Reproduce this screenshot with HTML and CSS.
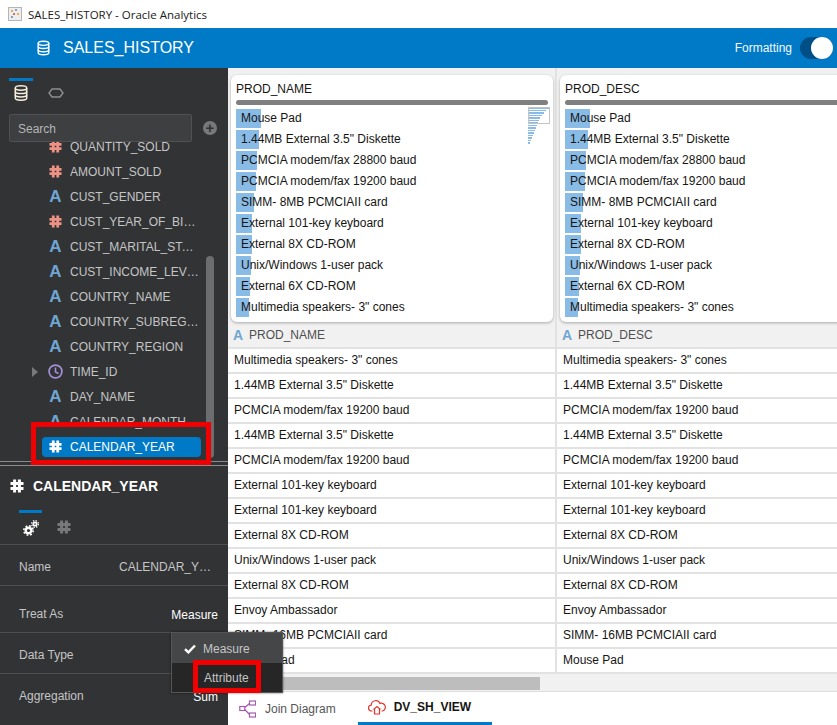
FILE: index.html
```html
<!doctype html>
<html>
<head>
<meta charset="utf-8">
<title>SALES_HISTORY - Oracle Analytics</title>
<link rel="stylesheet" href="styles.css">
</head>
<body>
<svg class="defs" width="0" height="0">
	<symbol id="hash" viewBox="0 0 14 14">
		<path d="M4.6 0.5v13M9.4 0.5v13M0.5 4.6h13M0.5 9.4h13" fill="none" stroke="currentColor" stroke-width="3"/>
	</symbol>
	<symbol id="db" viewBox="0 0 14 16">
		<g fill="none" stroke="currentColor" stroke-width="1.5">
			<ellipse cx="7" cy="3" rx="5.7" ry="2.2"/>
			<path d="M1.3 3v10c0 1.2 2.5 2.2 5.7 2.2s5.7-1 5.7-2.2V3"/>
			<path d="M1.3 6.4c0 1.2 2.5 2.2 5.7 2.2s5.7-1 5.7-2.2M1.3 9.8c0 1.2 2.5 2.2 5.7 2.2s5.7-1 5.7-2.2"/>
		</g>
	</symbol>
</svg>

<div class="titlebar">
	<svg class="appicon" width="14" height="14" viewBox="0 0 14 14">
		<rect x="0.5" y="0.5" width="13" height="13" fill="#eeeeee" stroke="#b5b5b5"/>
		<rect x="3" y="3" width="2" height="2" fill="#e8b04a"/>
		<rect x="7" y="2" width="2" height="2" fill="#6fa8d6"/>
		<rect x="5" y="6" width="2" height="2" fill="#d9705f"/>
		<rect x="9" y="6" width="2" height="2" fill="#e8b04a"/>
		<rect x="3" y="9" width="2" height="2" fill="#6fa8d6"/>
	</svg>
	<span>SALES_HISTORY - Oracle Analytics</span>
</div>

<header class="appbar">
	<svg class="appbar-db" width="13" height="16"><use href="#db"/></svg>
	<span class="appbar-title">SALES_HISTORY</span>
	<span class="appbar-label">Formatting</span>
	<span class="toggle"><span class="knob"></span></span>
</header>

<div class="workspace">
	<aside class="sidebar">
		<div class="fieldpane">
			<div class="icontabs">
				<div class="icontab active">
					<svg width="14" height="16"><use href="#db"/></svg>
				</div>
				<div class="icontab">
					<svg width="16" height="10" viewBox="0 0 16 10"><path d="M4 1h8l3 4-3 4H4L1 5z" fill="none" stroke="#8d8f91" stroke-width="1.4"/></svg>
				</div>
			</div>
			<div class="searchrow">
				<div class="searchbox">Search</div>
				<span class="addbtn">+</span>
			</div>
			<div class="fieldlist">
				<div class="fields">
					<div class="field"><div class="field-in"><svg class="ico num"><use href="#hash"/></svg><span class="fname">QUANTITY_SOLD</span></div></div>
					<div class="field"><div class="field-in"><svg class="ico num"><use href="#hash"/></svg><span class="fname">AMOUNT_SOLD</span></div></div>
					<div class="field"><div class="field-in"><b class="ico txt">A</b><span class="fname">CUST_GENDER</span></div></div>
					<div class="field"><div class="field-in"><svg class="ico num"><use href="#hash"/></svg><span class="fname">CUST_YEAR_OF_BIRTH</span></div></div>
					<div class="field"><div class="field-in"><b class="ico txt">A</b><span class="fname">CUST_MARITAL_STATUS</span></div></div>
					<div class="field"><div class="field-in"><b class="ico txt">A</b><span class="fname">CUST_INCOME_LEVEL</span></div></div>
					<div class="field"><div class="field-in"><b class="ico txt">A</b><span class="fname">COUNTRY_NAME</span></div></div>
					<div class="field"><div class="field-in"><b class="ico txt">A</b><span class="fname">COUNTRY_SUBREGION</span></div></div>
					<div class="field"><div class="field-in"><b class="ico txt">A</b><span class="fname">COUNTRY_REGION</span></div></div>
					<div class="field">
						<span class="caret"></span>
						<div class="field-in">
							<svg class="ico clock" viewBox="0 0 14 14"><circle cx="7" cy="7" r="6" fill="none" stroke="#a48fd8" stroke-width="1.6"/><path d="M7 3.2V7.4l2.8 1.4" fill="none" stroke="#a48fd8" stroke-width="1.5"/></svg>
							<span class="fname">TIME_ID</span>
						</div>
					</div>
					<div class="field"><div class="field-in"><b class="ico txt">A</b><span class="fname">DAY_NAME</span></div></div>
					<div class="field"><div class="field-in"><b class="ico txt">A</b><span class="fname">CALENDAR_MONTH</span></div></div>
					<div class="field"><div class="field-in selected"><svg class="ico"><use href="#hash"/></svg><span class="fname">CALENDAR_YEAR</span></div></div>
				</div>
				<div class="scrollthumb"></div>
			</div>
		</div>
		<div class="splitter"></div>
		<div class="detail">
			<div class="detail-title">
				<svg width="14" height="14"><use href="#hash"/></svg>
				<span>CALENDAR_YEAR</span>
			</div>
			<div class="detail-tabs">
				<div class="detail-tab active">
					<svg width="16" height="16" viewBox="0 0 16 16">
						<circle cx="5.5" cy="10.5" r="2.8" fill="none" stroke="#fff" stroke-width="2.4"/>
						<circle cx="5.5" cy="10.5" r="4.7" fill="none" stroke="#fff" stroke-width="1.6" stroke-dasharray="1.8 1.9"/>
						<circle cx="12" cy="4" r="1.7" fill="none" stroke="#fff" stroke-width="1.7"/>
						<circle cx="12" cy="4" r="3.4" fill="none" stroke="#fff" stroke-width="1.2" stroke-dasharray="1.4 1.3"/>
					</svg>
				</div>
				<div class="detail-tab">
					<svg class="hash-dim" width="14" height="14"><use href="#hash"/></svg>
				</div>
			</div>
			<div class="prop prop-name"><span>Name</span><span class="prop-val">CALENDAR_YEAR</span></div>
			<div class="prop prop-treat"><span>Treat As</span><span class="prop-strong">Measure</span></div>
			<div class="prop"><span>Data Type</span></div>
			<div class="prop prop-last"><span>Aggregation</span><span class="prop-strong">Sum</span></div>
		</div>
		<div class="redbox redbox-field"></div>
	</aside>

	<main class="main">
		<div class="grid">
			<div class="columns">
				<section class="column">
					<div class="card">
						<div class="card-title">PROD_NAME</div>
						<div class="card-rule"></div>
						<div class="hist"><i style="width:25px"></i><span>Mouse Pad</span></div>
						<div class="hist"><i style="width:23px"></i><span>1.44MB External 3.5" Diskette</span></div>
						<div class="hist"><i style="width:21px"></i><span>PCMCIA modem/fax 28800 baud</span></div>
						<div class="hist"><i style="width:20px"></i><span>PCMCIA modem/fax 19200 baud</span></div>
						<div class="hist"><i style="width:18px"></i><span>SIMM- 8MB PCMCIAII card</span></div>
						<div class="hist"><i style="width:16px"></i><span>External 101-key keyboard</span></div>
						<div class="hist"><i style="width:16px"></i><span>External 8X CD-ROM</span></div>
						<div class="hist"><i style="width:15px"></i><span>Unix/Windows 1-user pack</span></div>
						<div class="hist"><i style="width:14px"></i><span>External 6X CD-ROM</span></div>
						<div class="hist"><i style="width:13px"></i><span>Multimedia speakers- 3" cones</span></div>
						<div class="minimap">
							<i style="width:21px"></i><i style="width:18px"></i><i style="width:16px"></i><i style="width:14px"></i><i style="width:12px"></i><i style="width:11px"></i><i style="width:10px"></i><i style="width:9px"></i><i style="width:8px"></i><i style="width:7px"></i><i style="width:6px"></i><i style="width:5px"></i><i style="width:4px"></i><i style="width:3px"></i><i style="width:2px"></i>
						</div>
					</div>
					<div class="colhead"><b class="txt">A</b><span>PROD_NAME</span></div>
					<div class="cell">Multimedia speakers- 3" cones</div>
					<div class="cell">1.44MB External 3.5" Diskette</div>
					<div class="cell">PCMCIA modem/fax 19200 baud</div>
					<div class="cell">1.44MB External 3.5" Diskette</div>
					<div class="cell">PCMCIA modem/fax 19200 baud</div>
					<div class="cell">External 101-key keyboard</div>
					<div class="cell">External 101-key keyboard</div>
					<div class="cell">External 8X CD-ROM</div>
					<div class="cell">Unix/Windows 1-user pack</div>
					<div class="cell">External 8X CD-ROM</div>
					<div class="cell">Envoy Ambassador</div>
					<div class="cell">SIMM- 16MB PCMCIAII card</div>
					<div class="cell">Mouse Pad</div>
				</section>
				<section class="column">
					<div class="card">
						<div class="card-title">PROD_DESC</div>
						<div class="card-rule"></div>
						<div class="hist"><i style="width:25px"></i><span>Mouse Pad</span></div>
						<div class="hist"><i style="width:23px"></i><span>1.44MB External 3.5" Diskette</span></div>
						<div class="hist"><i style="width:21px"></i><span>PCMCIA modem/fax 28800 baud</span></div>
						<div class="hist"><i style="width:20px"></i><span>PCMCIA modem/fax 19200 baud</span></div>
						<div class="hist"><i style="width:18px"></i><span>SIMM- 8MB PCMCIAII card</span></div>
						<div class="hist"><i style="width:16px"></i><span>External 101-key keyboard</span></div>
						<div class="hist"><i style="width:16px"></i><span>External 8X CD-ROM</span></div>
						<div class="hist"><i style="width:15px"></i><span>Unix/Windows 1-user pack</span></div>
						<div class="hist"><i style="width:14px"></i><span>External 6X CD-ROM</span></div>
						<div class="hist"><i style="width:13px"></i><span>Multimedia speakers- 3" cones</span></div>
					</div>
					<div class="colhead"><b class="txt">A</b><span>PROD_DESC</span></div>
					<div class="cell">Multimedia speakers- 3" cones</div>
					<div class="cell">1.44MB External 3.5" Diskette</div>
					<div class="cell">PCMCIA modem/fax 19200 baud</div>
					<div class="cell">1.44MB External 3.5" Diskette</div>
					<div class="cell">PCMCIA modem/fax 19200 baud</div>
					<div class="cell">External 101-key keyboard</div>
					<div class="cell">External 101-key keyboard</div>
					<div class="cell">External 8X CD-ROM</div>
					<div class="cell">Unix/Windows 1-user pack</div>
					<div class="cell">External 8X CD-ROM</div>
					<div class="cell">Envoy Ambassador</div>
					<div class="cell">SIMM- 16MB PCMCIAII card</div>
					<div class="cell">Mouse Pad</div>
				</section>
			</div>
		</div>
		<div class="hscroll"><div class="hscroll-thumb"></div></div>
		<nav class="bottomtabs">
			<div class="btab">
				<svg width="17" height="18" viewBox="0 0 17 18" fill="none" stroke="#a55bb0" stroke-width="1.2">
					<rect x="0.8" y="6.5" width="5" height="4"/>
					<rect x="10.5" y="1" width="6" height="4"/>
					<rect x="10.5" y="13" width="6" height="4"/>
					<path d="M5.8 7.5l4.7-4M5.8 9.5l4.7 5"/>
				</svg>
				<span>Join Diagram</span>
			</div>
			<div class="btab active">
				<svg width="18" height="16" viewBox="0 0 18 16" fill="none" stroke="#e2362c" stroke-width="1.2">
					<path d="M4.5 12H3.6A2.9 2.9 0 0 1 3.2 6.2 4.6 4.6 0 0 1 12 4.4a3.9 3.9 0 0 1 2.6 7.6h-1"/>
					<path d="M5.5 10.5L9 7.5l3.5 3M6.5 10v5h5v-5"/>
				</svg>
				<span>DV_SH_VIEW</span>
			</div>
		</nav>
	</main>
</div>

<div class="popup">
	<div class="popup-item current">
		<svg width="12" height="10" viewBox="0 0 12 10"><path d="M1 5.2l3.4 3.2L11 1.5" fill="none" stroke="#fff" stroke-width="2.4"/></svg>
		<span>Measure</span>
	</div>
	<div class="popup-item"><span>Attribute</span></div>
</div>
<div class="redbox redbox-attr"></div>
</body>
</html>
```
FILE: styles.css
```css
html, body {
	margin: 0;
	height: 725px;
	overflow: hidden;
}
body {
	position: relative;
	display: flex;
	flex-direction: column;
	font-family: "Liberation Sans", Arial, sans-serif;
	font-size: 12px;
	color: #161513;
	background: #fff;
}
.defs {
	position: absolute;
}

/* window title */
.titlebar {
	height: 28px;
	flex: none;
	display: flex;
	align-items: center;
	padding-left: 8px;
	gap: 6px;
	font-family: "Open Sans", sans-serif;
	font-size: 11.5px;
	color: #1a1a1a;
	background: #fff;
}

/* blue bar */
.appbar {
	height: 40px;
	flex: none;
	display: flex;
	align-items: center;
	padding: 0 4px 0 37px;
	color: #fff;
	background: #007ac6;
}
.appbar-title {
	margin-left: 13px;
	font-size: 16px;
	flex: 1;
}
.appbar-label {
	font-size: 12px;
	color: #f2f8fc;
	margin-right: 8px;
}
.toggle {
	width: 33px;
	height: 22px;
	border-radius: 11px;
	display: flex;
	justify-content: flex-end;
	background: #004f86;
}
.knob {
	width: 22px;
	height: 22px;
	border-radius: 50%;
	background: #fff;
}

.workspace {
	flex: 1;
	display: flex;
	min-height: 0;
}

/* left panel */
.sidebar {
	position: relative;
	width: 228px;
	flex: none;
	display: flex;
	flex-direction: column;
	color: #c4c5c6;
	background: #323335;
}
.fieldpane {
	height: 393px;
	flex: none;
	display: flex;
	flex-direction: column;
}
.icontabs {
	height: 36px;
	margin: 10px 0 0 9px;
	display: flex;
	gap: 11px;
}
.icontab {
	width: 24px;
	display: flex;
	align-items: center;
	justify-content: center;
	padding-top: 3px;
	height: 24px;
}
.icontab.active {
	border-top: 3px solid #007ac6;
	padding-top: 1px;
	height: 22px;
	color: #f6efdc;
}
.searchrow {
	display: flex;
	align-items: center;
	gap: 11px;
	margin-left: 9px;
}
.searchbox {
	width: 173px;
	height: 26px;
	line-height: 29px;
	padding-left: 8px;
	border: 1px solid #505153;
	border-radius: 2px;
	color: #b4b5b6;
	background: #3e3f41;
}
.addbtn {
	width: 14px;
	height: 14px;
	border-radius: 50%;
	text-align: center;
	line-height: 14px;
	font-size: 15px;
	font-weight: bold;
	color: #323335;
	background: #77797b;
}
.fieldlist {
	position: relative;
	flex: 1;
	overflow: hidden;
}
.fields {
	margin-top: -8px;
}
.field {
	height: 25px;
	display: grid;
	grid-template-columns: 42px 159px;
	align-items: center;
}
.field-in {
	grid-column: 2;
	grid-row: 1;
	height: 20px;
	display: flex;
	align-items: center;
	gap: 8px;
	padding: 0 1px 0 7px;
	border-radius: 4px;
	font-size: 12px;
}
.field-in.selected {
	color: #fff;
	background: #007ac6;
}
.fname {
	flex: 1;
	min-width: 0;
	white-space: nowrap;
	overflow: hidden;
	text-overflow: ellipsis;
}
.ico {
	width: 13px;
	height: 13px;
	flex: none;
}
.clock {
	width: 15px;
	height: 15px;
	margin: 0 -1px;
}
.num {
	color: #ee9286;
}
.txt {
	color: #6fa6d3;
	font-size: 17px;
	line-height: 13px;
	text-align: center;
}
.caret {
	grid-column: 1;
	grid-row: 1;
	justify-self: end;
	margin-right: 4px;
	border-left: 6px solid #77797b;
	border-top: 5px solid transparent;
	border-bottom: 5px solid transparent;
}
.scrollthumb {
	position: absolute;
	left: 206px;
	top: 114px;
	width: 8px;
	height: 202px;
	border-radius: 4px;
	background: #6b6d6f;
}
.splitter {
	height: 3px;
	flex: none;
	border-top: 1px solid #8a8b8c;
	border-bottom: 1px solid #8a8b8c;
}

.detail {
	flex: 1;
	min-height: 0;
}
.detail-title {
	height: 40px;
	display: flex;
	align-items: center;
	gap: 9px;
	padding-left: 10px;
	font-size: 14px;
	font-weight: bold;
	color: #fff;
}
.detail-tabs {
	height: 38px;
	display: flex;
	padding-left: 19px;
	gap: 10px;
	border-bottom: 1px solid #4e4f51;
}
.detail-tab {
	width: 23px;
	height: 30px;
	margin-top: 4px;
	display: flex;
	align-items: center;
	justify-content: center;
	padding-top: 3px;
	box-sizing: border-box;
	color: #fff;
}
.detail-tab.active {
	border-top: 3px solid #007ac6;
}
.hash-dim {
	color: #77797b;
}
.prop {
	height: 36px;
	display: flex;
	align-items: center;
	justify-content: space-between;
	padding: 4px 10px 0 19px;
	border-bottom: 1px solid #4e4f51;
}
.prop-treat {
	padding-top: 10px;
}
.prop-name .prop-val {
	width: 95px;
	margin-right: 4px;
	white-space: nowrap;
	overflow: hidden;
	text-overflow: ellipsis;
}
.prop-strong {
	margin-top: 2px;
	color: #fff;
}
.prop-last {
	border-bottom: 0;
}

/* red highlights from the tutorial */
.redbox {
	position: absolute;
	box-sizing: border-box;
	border: 5px solid #f00000;
	z-index: 5;
}
.redbox-field {
	left: 31px;
	top: 354px;
	width: 180px;
	height: 43px;
}
.redbox-attr {
	left: 193px;
	top: 660px;
	width: 68px;
	height: 33px;
}

/* data area */
.main {
	flex: 1;
	min-width: 0;
	display: flex;
	flex-direction: column;
	background: #f1f1f1;
}
.grid {
	flex: 1;
	min-height: 0;
	overflow: hidden;
}
.columns {
	display: flex;
	width: 658px;
}
.column {
	width: 329px;
	flex: none;
	box-sizing: border-box;
	border-right: 2px solid #e2e2e2;
}
.card {
	position: relative;
	height: 247px;
	box-sizing: border-box;
	margin: 7px 0 0 3px;
	padding: 0 5px;
	width: 322px;
	border-radius: 6px;
	background: #fff;
	box-shadow: 0 1px 3px rgba(0, 0, 0, 0.3);
}
.card-title {
	height: 25px;
	line-height: 29px;
	font-size: 12px;
}
.card-rule {
	height: 5px;
	margin-bottom: 4px;
	border-radius: 3px;
	background: #808080;
}
.hist {
	position: relative;
	height: 19px;
	margin-bottom: 2px;
	line-height: 19px;
	padding-left: 5px;
}
.hist i {
	position: absolute;
	left: 0;
	top: 0;
	height: 19px;
	background: #88bbe6;
}
.hist span {
	position: relative;
}
.minimap {
	position: absolute;
	right: 3px;
	top: 32px;
	width: 22px;
	height: 38px;
	display: flex;
	flex-direction: column;
	gap: 1px;
}
.minimap::before {
	content: "";
	position: absolute;
	left: 0;
	top: 0;
	width: 20px;
	height: 15px;
	border: 1px solid #c4c4c4;
}
.minimap i {
	height: 1.5px;
	background: #88bbe6;
}
.colhead {
	height: 26px;
	margin-top: 1px;
	display: flex;
	align-items: center;
	gap: 6px;
	padding-left: 5px;
	color: #4f4f4f;
	box-sizing: border-box;
	border-bottom: 2px solid #e2e2e2;
}
.colhead .txt {
	font-size: 14px;
	width: 10px;
}
.cell {
	height: 25px;
	line-height: 22px;
	box-sizing: border-box;
	padding-left: 6px;
	background: #fff;
	border-bottom: 2px solid #e2e2e2;
}
.hscroll {
	height: 17px;
	flex: none;
	box-sizing: border-box;
	padding-top: 2px;
	border-bottom: 1px solid #dddddd;
}
.hscroll-thumb {
	width: 312px;
	height: 13px;
	background: #bdbdbd;
}
.bottomtabs {
	height: 33px;
	flex: none;
	display: flex;
	background: #fff;
	padding-left: 11px;
}
.btab {
	display: flex;
	align-items: center;
	gap: 9px;
	padding-right: 22px;
	color: #555;
	box-sizing: border-box;
}
.btab.active {
	gap: 8px;
	padding: 0 21px 0 10px;
	font-weight: bold;
	color: #161513;
	border-bottom: 3px solid #007ac6;
}

/* Treat As dropdown */
.popup {
	position: absolute;
	left: 171px;
	top: 632px;
	width: 112px;
	box-sizing: border-box;
	z-index: 4;
	color: #c4c5c6;
	background: #262627;
	border: 1px solid #555658;
	box-shadow: 0 0 2px rgba(0, 0, 0, 0.6);
}
.popup-item {
	height: 29px;
	display: flex;
	align-items: center;
	gap: 8px;
	padding-left: 32px;
}
.popup-item.current {
	height: 30px;
	box-sizing: border-box;
	padding: 2px 0 0 12px;
	gap: 7px;
	background: #454648;
}
```
